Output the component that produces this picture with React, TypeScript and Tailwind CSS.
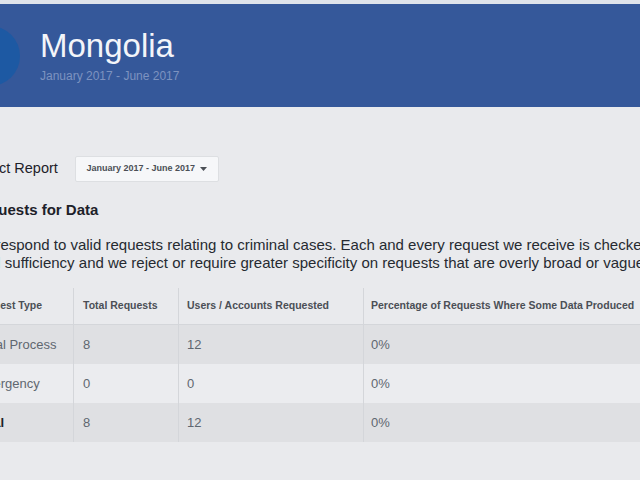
import React from 'react';

const rows = [
  { type: 'Legal Process', total: '8', users: '12', pct: '0%' },
  { type: 'Emergency', total: '0', users: '0', pct: '0%' },
  { type: 'Total', total: '8', users: '12', pct: '0%', bold: true },
];

const cols = 'grid grid-cols-[103px_105px_185px_330px]';

export default function App() {
  return (
    <div className="w-[640px] h-[480px] overflow-hidden bg-[#e9eaed] font-['Liberation_Sans',Arial,sans-serif]">
      {/* Country header */}
      <div className="h-[4px] bg-[#dfe3ea]" />
      <header className="h-[103px] bg-[#35589a] flex items-center gap-[20px] ml-[-40px]">
        <div className="w-[60px] h-[60px] rounded-full bg-[#1d59a3] shrink-0" />
        <div className="flex flex-col gap-[8px]">
          <h1 className="text-[33px] leading-none text-[#f3f5f9]">Mongolia</h1>
          <p className="text-[12px] leading-none text-[#7d93c0]">January 2017 - June 2017</p>
        </div>
      </header>

      <main className="ml-[-30px] w-[760px]">
        {/* Report picker */}
        <div className="flex items-center gap-[17px] mt-[49px]">
          <span className="text-[14.5px] text-[#1d2129]">Select Report</span>
          <button className="h-[26px] w-[144px] bg-[#f6f7f9] border border-[#dddfe2] rounded-[2px] flex items-center justify-center gap-[5px] text-[9px] font-bold text-[#4b4f56]">
            January 2017 - June 2017
            <svg width="7" height="4" viewBox="0 0 7 4">
              <path d="M0 0h7L3.5 4z" fill="#4b4f56" />
            </svg>
          </button>
        </div>

        <h2 className="mt-[20px] text-[15px] leading-none font-bold text-[#1d2129]">Requests for Data</h2>

        <p className="mt-[19px] ml-[-1px] text-[15px] leading-[18px] text-[#262a31] whitespace-nowrap">
          We respond to valid requests relating to criminal cases. Each and every request we receive is checked for
          <br />
          legal sufficiency and we reject or require greater specificity on requests that are overly broad or vague.
        </p>

        {/* Data table */}
        <div className="mt-[16px] text-[#606770]">
          <div className={`${cols} h-[37px] border-b border-[#d4d6da] text-[10.5px] font-bold text-[#4b4f56]`}>
            <div className="flex items-center pl-[4px]">Request Type</div>
            <div className="flex items-center pl-[9px] border-l border-[#d4d6da]">Total Requests</div>
            <div className="flex items-center pl-[8px] border-l border-[#d4d6da]">Users / Accounts Requested</div>
            <div className="flex items-center pl-[7px] border-l border-[#d4d6da]">Percentage of Requests Where Some Data Produced</div>
          </div>
          {rows.map((r, i) => (
            <div
              key={r.type}
              className={`${cols} h-[39px] text-[13px] ${i % 2 === 0 ? 'bg-[#dfe0e3]' : 'bg-[#ebecef]'}`}
            >
              <div className={`flex items-center pl-[4px] ${r.bold ? 'font-bold text-[#1d2129]' : ''}`}>{r.type}</div>
              <div className="flex items-center pl-[9px] border-l border-[#d4d6da]">{r.total}</div>
              <div className="flex items-center pl-[8px] border-l border-[#d4d6da]">{r.users}</div>
              <div className="flex items-center pl-[7px] border-l border-[#d4d6da]">{r.pct}</div>
            </div>
          ))}
        </div>
      </main>
    </div>
  );
}
